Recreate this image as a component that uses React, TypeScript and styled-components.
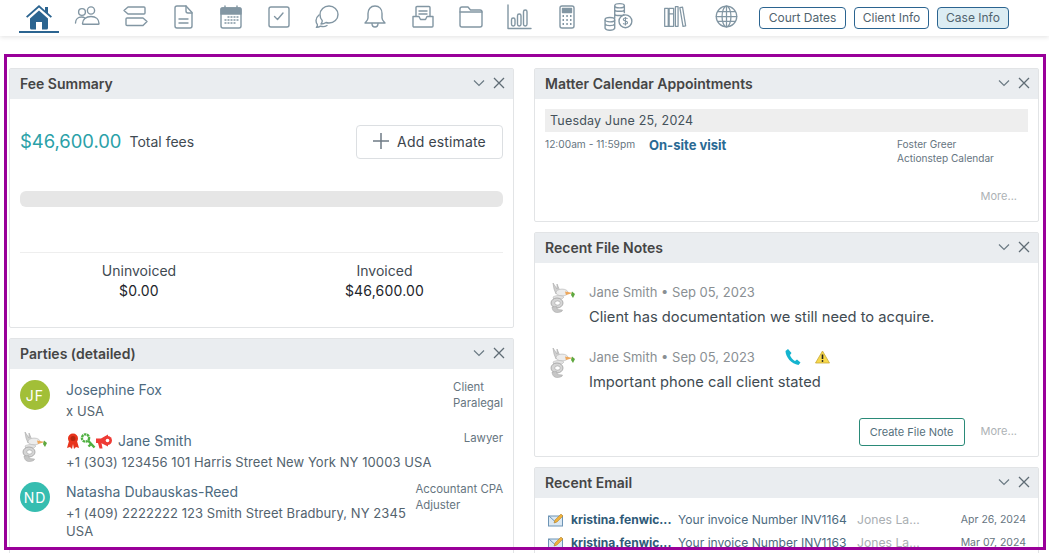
import React from 'react'
import styled, { createGlobalStyle } from 'styled-components'

const GlobalStyle = createGlobalStyle`
  html, body {
    margin: 0;
    height: 553px;
    overflow: hidden;
    background: #fff;
    font-family: Inter, "Liberation Sans", sans-serif;
  }
  * { box-sizing: border-box; }
`

const iconGrey = '#8296a3'

const Line = ({ children, size = 28 }: { children: React.ReactNode; size?: number }) => (
  <svg
    width={size}
    height={size}
    viewBox="0 0 28 28"
    fill="none"
    stroke={iconGrey}
    strokeWidth="1.4"
    strokeLinecap="round"
    strokeLinejoin="round">
    {children}
  </svg>
)

const toolbarIcons: { width: number; icon: React.ReactNode }[] = [
  {
    width: 48,
    icon: (
      <Line>
        <circle cx="9" cy="9" r="3.4" />
        <circle cx="18" cy="7.5" r="3.6" />
        <path d="M2.5 20c0-4 3-6 6-6 1.400 0 2.600.4 3.400 1" />
        <path d="M9.500 20.500c0-4 3.500-7 8.500-7s8 3 8 7c0 .5-.3.8-.8.8H10.300c-.5 0-.8-.3-.8-.8z" />
      </Line>
    )
  },
  {
    width: 48,
    icon: (
      <Line>
        <path d="M7 4h16a1 1 0 0 1 1 1v5a1 1 0 0 1-1 1H7L3 7.500z" />
        <path d="M6 15h16l4 3.500-4 4H6a1 1 0 0 1-1-1v-5.500a1 1 0 0 1 1-1z" />
      </Line>
    )
  },
  {
    width: 48,
    icon: (
      <Line>
        <path d="M8 3h9l6 6.500V23a2 2 0 0 1-2 2H8a2 2 0 0 1-2-2V5a2 2 0 0 1 2-2z" />
        <path d="M17 3v5a2 2 0 0 0 2 2h4M10 16h9M10 20h9" />
      </Line>
    )
  },
  {
    width: 48,
    icon: (
      <Line>
        <rect x="4" y="5" width="20" height="20" rx="2" />
        <path d="M4 6a1 1 0 0 1 1-1h18a1 1 0 0 1 1 1v5H4z" fill={iconGrey} />
        <path d="M8 3v3M20 3v3" />
        <path d="M11 14h1M14 14h1M17 14h1M20 14h1M8 17h1M11 17h1M14 17h1M17 17h1M20 17h1M8 20h1M11 20h1M14 20h1M17 20h1" />
      </Line>
    )
  },
  {
    width: 48,
    icon: (
      <Line>
        <rect x="4" y="4" width="20" height="20" rx="2" />
        <path d="M9.500 13.500l3 3 5.500-6.500" />
      </Line>
    )
  },
  {
    width: 48,
    icon: (
      <Line>
        <path d="M16 3c5 0 9 3.600 9 8.500S21 20 16 20c-1 0-2-.1-3-.5-1.500 1-3 1.500-5 1.500 1-1.200 1.500-2.300 1.200-3.600C7.700 16 7 13.800 7 11.500 7 6.600 11 3 16 3z" />
        <path d="M6 12c-2 1.600-3 3.500-3 5.600 0 1.500.5 2.900 1.400 4 .2 1-.2 2-1 2.800 1.800 0 3-.4 4.200-1.300 1.900.7 4.400.6 6.400-.6" />
      </Line>
    )
  },
  {
    width: 48,
    icon: (
      <Line>
        <path d="M14 3c4.500 0 7 3.300 7 7.500v4.500c0 2 1.500 3.300 3 5H4c1.500-1.700 3-3 3-5v-4.500C7 6.300 9.500 3 14 3z" />
        <path d="M11 20.500c0 2 1.300 3.500 3 3.500s3-1.500 3-3.500" />
      </Line>
    )
  },
  {
    width: 48,
    icon: (
      <Line>
        <path d="M7 13V4.500A1 1 0 0 1 8 3.500h12a1 1 0 0 1 1 1V13" />
        <path d="M10 8h8M10 11h8" />
        <path d="M4 13.500h6l1.500 3h5l1.500-3h6V23a1 1 0 0 1-1 1H5a1 1 0 0 1-1-1z" />
      </Line>
    )
  },
  {
    width: 48,
    icon: (
      <Line>
        <path d="M3 8V6a2 2 0 0 1 2-2h6l2.500 3H23a2 2 0 0 1 2 2v13a2 2 0 0 1-2 2H5a2 2 0 0 1-2-2z" />
        <path d="M3 9h22" />
      </Line>
    )
  },
  {
    width: 48,
    icon: (
      <Line>
        <path d="M3 2v23.500h23" />
        <rect x="6.500" y="15" width="3.500" height="8" rx="1.700" />
        <rect x="12.500" y="11" width="3.500" height="12" rx="1.700" />
        <rect x="18.500" y="7" width="3.500" height="16" rx="1.700" />
      </Line>
    )
  },
  {
    width: 48,
    icon: (
      <Line>
        <rect x="7" y="3" width="14" height="22" rx="2" />
        <rect x="9.500" y="5.500" width="9" height="4" fill={iconGrey} />
        <path
          d="M9.500 13h1.500M13.300 13h1.500M17 13h1.500M9.500 17h1.500M13.300 17h1.500M17 17h1.500M9.500 21h1.500M13.300 21h1.500M17 21h1.500"
          strokeWidth="2"
          strokeLinecap="butt"
        />
      </Line>
    )
  },
  {
    width: 56,
    icon: (
      <svg width="30" height="30" viewBox="0 0 28 28" fill="none" stroke={iconGrey} strokeWidth="1.3">
        <ellipse cx="14.500" cy="3.500" rx="4.500" ry="2" />
        <path d="M10 3.500v12M19 3.500v7M10 7.500c1 1.500 8 1.500 9 0M10 11.500c1 1.500 8 1.500 9 0" />
        <ellipse cx="5.500" cy="16.500" rx="4.500" ry="2" />
        <path d="M1 16.500v8c1 2.500 8 2.500 9 0v-8M1 20.500c1 2 8 2 9 0" />
        <circle cx="20" cy="18" r="6" />
        <path d="M22 15.500c-1-1-4-.8-4 .8 0 2 4 1 4 3 0 1.500-3 1.700-4.200.6M20 14v8" strokeWidth="1" />
      </svg>
    )
  },
  {
    width: 54,
    icon: (
      <Line size={25}>
        <path d="M3 5h4v20H3zM8 5h5v20H8zM8 11h5M15 3h3v22h-3zM20 4l3-.5 3.500 21-3 .5z" />
      </Line>
    )
  },
  {
    width: 50,
    icon: (
      <Line size={25}>
        <circle cx="14" cy="14" r="11.500" />
        <ellipse cx="14" cy="14" rx="5" ry="11.500" />
        <path d="M14 2.500v23M2.500 14h23M4 8.500h20M4 19.500h20" />
      </Line>
    )
  }
]

const Rabbit = () => (
  <svg width="28" height="32" viewBox="0 0 28 32">
    <path d="M5 1l4 6 0-5 3 7-4 3-2-5z" fill="#cfcfcf" stroke="#a8a8a8" strokeWidth="0.6" />
    <ellipse cx="14" cy="10.500" rx="6" ry="3.400" fill="#ececec" stroke="#b0b0b0" strokeWidth="0.6" />
    <path d="M17 9.500l8 1.500-7 2z" fill="#eda75c" />
    <path d="M24 9.500l3 2.500-2 4-2-3z" fill="#5fa83f" />
    <path d="M5 15c3-2 8-2 11 0l-2 2-8 1z" fill="#e2e2e2" stroke="#b0b0b0" strokeWidth="0.5" />
    <ellipse cx="9" cy="21" rx="6" ry="5" fill="#d5d5d5" stroke="#a0a0a0" strokeWidth="0.8" />
    <ellipse cx="9.500" cy="21" rx="2.800" ry="2.100" fill="#fff" stroke="#a0a0a0" strokeWidth="0.6" />
    <path d="M4 25c0 2 1.500 5.500 4.500 5.500 2.500 0 6-.5 6-2.500l-5-.5-1-3z" fill="#c6c6c6" stroke="#a0a0a0" strokeWidth="0.5" />
  </svg>
)

const RibbonIcon = () => (
  <svg width="14" height="16" viewBox="0 0 14 16">
    <path d="M3 8l-2 7 3-1 2 2 1-5 1 5 2-2 3 1-2-7z" fill="#e8341c" />
    <circle cx="7" cy="5.500" r="5" fill="#e8341c" />
    <circle cx="7" cy="5.500" r="2.500" fill="#b5270f" />
  </svg>
)

const KeyIcon = () => (
  <svg width="16" height="16" viewBox="0 0 16 16" fill="none" stroke="#4fb041" strokeWidth="2.4">
    <circle cx="5.500" cy="5" r="3.600" strokeDasharray="2.400 0.600" />
    <path d="M8 7.500l6.500 7M11 11l-2.500 2.500" />
  </svg>
)

const HornIcon = () => (
  <svg width="16" height="16" viewBox="0 0 16 16">
    <path d="M0 5.500h5l7-4v12L5 10H0z" fill="#ee3b35" />
    <path d="M2 10h3.500l1 5.500H3.500z" fill="#ee3b35" />
    <circle cx="11.500" cy="7.500" r="4.500" fill="#ee3b35" />
    <circle cx="11.500" cy="7.500" r="1.800" fill="#fff" />
  </svg>
)

const PhoneIcon = () => (
  <svg width="18" height="18" viewBox="0 0 18 18">
    <path d="M4 1L1.500 3c0 6 6 13 13 14l2-2.500-3.500-3-2 1.500C9 12 6.500 9 6 7l1.500-2z" fill="#14b4cf" />
  </svg>
)

const WarnIcon = () => (
  <svg width="15" height="14" viewBox="0 0 15 14">
    <path d="M7.500 1L14.500 13H.5z" fill="#f7d84a" stroke="#c9a93a" strokeWidth="0.8" strokeLinejoin="round" />
    <path d="M7.500 4.500v4.500" stroke="#222" strokeWidth="1.600" />
    <circle cx="7.500" cy="11" r="0.9" fill="#222" />
  </svg>
)

const MailIcon = () => (
  <svg width="16" height="14" viewBox="0 0 16 14">
    <rect x="0.5" y="3" width="14" height="10" fill="#dbe8f3" stroke="#6d94b5" />
    <path d="M1 3l6.500 6L14 3" fill="none" stroke="#6d94b5" />
    <path d="M6 10l1-3 6-6 2 2-6 6z" fill="#f0b13c" stroke="#a87820" strokeWidth="0.5" />
  </svg>
)

const Chevron = () => (
  <svg width="12" height="8" viewBox="0 0 12 8" fill="none" stroke="#6c7a84" strokeWidth="1.2">
    <path d="M1 1.500l5 5 5-5" />
  </svg>
)

const Cross = () => (
  <svg width="12" height="12" viewBox="0 0 12 12" fill="none" stroke="#5f6c75" strokeWidth="1.3">
    <path d="M1 1l10 10M11 1L1 11" />
  </svg>
)

const Panel = ({
  title,
  height,
  children
}: {
  title: string
  height: number
  children: React.ReactNode
}) => (
  <Card $height={height}>
    <CardHeader>
      <CardTitle>{title}</CardTitle>
      <CardTools>
        <Chevron />
        <Cross />
      </CardTools>
    </CardHeader>
    {children}
  </Card>
)

const App: React.FC = () => (
  <Page>
    <GlobalStyle />
    <Toolbar>
      <HomeTab>
        <svg width="28" height="26" viewBox="0 0 28 26">
          <path d="M14 1L1 12.500l1.300 1.300L14 3.500l11.700 10.300 1.300-1.300-4-3.500V3h-3v3.500z" fill="#2b6490" />
          <path d="M5 14.500L14 6.500l9 8V24a1.500 1.500 0 0 1-1.500 1.500H17V18h-6v7.500H6.500A1.500 1.500 0 0 1 5 24z" fill="#2b6490" />
        </svg>
      </HomeTab>
      {toolbarIcons.map((item, index) => (
        <IconTab key={index} $width={item.width}>
          {item.icon}
        </IconTab>
      ))}
      <QuickLinks>
        <QuickLink $width={87}>Court Dates</QuickLink>
        <QuickLink $width={75}>Client Info</QuickLink>
        <QuickLink $width={72} $active>
          Case Info
        </QuickLink>
      </QuickLinks>
    </Toolbar>

    <Columns>
      <Column>
        <Panel title="Fee Summary" height={260}>
          <FeeBody>
            <FeeTop>
              <FeeAmount>$46,600.00</FeeAmount>
              <FeeLabel>Total fees</FeeLabel>
              <AddButton>
                <svg width="16" height="16" viewBox="0 0 16 16" stroke="#6f7b85" strokeWidth="1.5">
                  <path d="M8 0v16M0 8h16" />
                </svg>
                Add estimate
              </AddButton>
            </FeeTop>
            <FeeBar />
            <FeeTotals>
              <FeeTotal>
                <span>Uninvoiced</span>
                <strong>$0.00</strong>
              </FeeTotal>
              <FeeTotal>
                <span>Invoiced</span>
                <strong>$46,600.00</strong>
              </FeeTotal>
            </FeeTotals>
          </FeeBody>
        </Panel>

        <Panel title="Parties (detailed)" height={300}>
          <PartyList>
            <PartyRow>
              <Avatar $color="#a2bf37">JF</Avatar>
              <PartyText>
                <PartyName>Josephine Fox</PartyName>
                <PartyDetail>x USA</PartyDetail>
              </PartyText>
              <PartyRoles>
                Client
                <br />
                Paralegal
              </PartyRoles>
            </PartyRow>
            <PartyRow>
              <Rabbit />
              <PartyText>
                <PartyName>
                  <BadgeIcons>
                    <RibbonIcon />
                    <KeyIcon />
                    <HornIcon />
                  </BadgeIcons>
                  Jane Smith
                </PartyName>
                <PartyDetail>+1 (303) 123456 101 Harris Street New York NY 10003 USA</PartyDetail>
              </PartyText>
              <PartyRoles>Lawyer</PartyRoles>
            </PartyRow>
            <PartyRow>
              <Avatar $color="#36bdb0">ND</Avatar>
              <PartyText>
                <PartyName>Natasha Dubauskas-Reed</PartyName>
                <PartyDetail>
                  +1 (409) 2222222 123 Smith Street Bradbury, NY 2345
                  <br />
                  USA
                </PartyDetail>
              </PartyText>
              <PartyRoles>
                Accountant CPA
                <br />
                Adjuster
              </PartyRoles>
            </PartyRow>
          </PartyList>
        </Panel>
      </Column>

      <Column>
        <Panel title="Matter Calendar Appointments" height={154}>
          <CalendarBody>
            <DateBar>Tuesday June 25, 2024</DateBar>
            <Appointment>
              <AppointmentTime>12:00am - 11:59pm</AppointmentTime>
              <AppointmentTitle>On-site visit</AppointmentTitle>
              <AppointmentMeta>
                Foster Greer
                <br />
                Actionstep Calendar
              </AppointmentMeta>
            </Appointment>
            <CardFooter>
              <MoreLink>More...</MoreLink>
            </CardFooter>
          </CalendarBody>
        </Panel>

        <Panel title="Recent File Notes" height={225}>
          <NotesBody>
            <Note>
              <Rabbit />
              <div>
                <NoteMeta>
                  <span>Jane Smith • Sep 05, 2023</span>
                </NoteMeta>
                <NoteText>Client has documentation we still need to acquire.</NoteText>
              </div>
            </Note>
            <Note>
              <Rabbit />
              <div>
                <NoteMeta>
                  <span>Jane Smith • Sep 05, 2023</span>
                  <NoteFlags>
                    <PhoneIcon />
                    <WarnIcon />
                  </NoteFlags>
                </NoteMeta>
                <NoteText>Important phone call client stated</NoteText>
              </div>
            </Note>
            <NotesFooter>
              <CreateButton>Create File Note</CreateButton>
              <MoreLink>More...</MoreLink>
            </NotesFooter>
          </NotesBody>
        </Panel>

        <Panel title="Recent Email" height={120}>
          <EmailList>
            <EmailRow>
              <MailIcon />
              <EmailFrom>kristina.fenwic...</EmailFrom>
              <EmailSubject>Your invoice Number INV1164</EmailSubject>
              <EmailMatter>Jones La...</EmailMatter>
              <EmailDate>Apr 26, 2024</EmailDate>
            </EmailRow>
            <EmailRow>
              <MailIcon />
              <EmailFrom>kristina.fenwic...</EmailFrom>
              <EmailSubject>Your invoice Number INV1163</EmailSubject>
              <EmailMatter>Jones La...</EmailMatter>
              <EmailDate>Mar 07, 2024</EmailDate>
            </EmailRow>
          </EmailList>
        </Panel>
      </Column>
    </Columns>
    <Highlight />
  </Page>
)

const Page = styled.div`
  position: relative;
  height: 553px;
  overflow: hidden;
`

const Toolbar = styled.div`
  height: 36px;
  padding-left: 15px;
  display: flex;
  align-items: flex-start;
  background: #fff;
  box-shadow: 0 1px 5px rgba(0, 0, 0, 0.12);
`

const IconTab = styled.div<{ $width: number }>`
  width: ${(p) => p.$width}px;
  height: 33px;
  display: flex;
  align-items: center;
  justify-content: center;
`

const HomeTab = styled(IconTab).attrs({ $width: 48 })`
  padding-top: 1px;
  position: relative;

  &::after {
    content: '';
    position: absolute;
    left: 4px;
    right: 4px;
    bottom: 0;
    height: 2px;
    background: #2b6490;
  }
`

const QuickLinks = styled.div`
  margin: 7px 0 0 8px;
  display: flex;
  gap: 8px;
`

const QuickLink = styled.button<{ $active?: boolean; $width: number }>`
  width: ${(p) => p.$width}px;
  height: 22px;
  padding: 0 0 1px;
  border: 1px solid #2b6490;
  border-radius: 4px;
  background: ${(p) => (p.$active ? '#dcedf3' : '#fff')};
  color: #51646f;
  font: 400 12px Inter, "Liberation Sans", sans-serif;
`

const Columns = styled.div`
  height: 517px;
  padding: 32px 10px 0 9px;
  display: grid;
  grid-template-columns: 505px 505px;
  column-gap: 20px;
  overflow: hidden;
`

const Column = styled.div`
  display: flex;
  flex-direction: column;
  gap: 10px;
`

const Card = styled.section<{ $height: number }>`
  height: ${(p) => p.$height}px;
  flex-shrink: 0;
  border: 1px solid #e2e4e6;
  border-radius: 2px;
  background: #fff;
`

const CardHeader = styled.header`
  height: 30px;
  padding: 0 8px 2px 10px;
  display: flex;
  align-items: center;
  justify-content: space-between;
  background: #eaedf0;
`

const CardTitle = styled.h2`
  margin: 0;
  font-size: 14px;
  font-weight: 600;
  color: #454545;
`

const CardTools = styled.div`
  display: flex;
  align-items: center;
  gap: 8px;
`

const FeeBody = styled.div`
  padding: 26px 10px 0;
`

const FeeTop = styled.div`
  display: flex;
  align-items: center;
`

const FeeAmount = styled.span`
  padding-bottom: 2px;
  font-size: 18.4px;
  color: #2aa1a8;
`

const FeeLabel = styled.span`
  margin-left: 8px;
  padding-bottom: 2px;
  flex: 1;
  font-size: 14px;
  color: #3f4a52;
`

const AddButton = styled.button`
  width: 147px;
  height: 34px;
  padding: 0 0 2px;
  display: flex;
  align-items: center;
  justify-content: center;
  gap: 8px;
  border: 1px solid #dcdfe2;
  border-radius: 4px;
  background: #fff;
  color: #3b444c;
  font: 400 14px Inter, "Liberation Sans", sans-serif;
  letter-spacing: 0.15px;
`

const FeeBar = styled.div`
  height: 16px;
  margin-top: 32px;
  border-radius: 6px;
  background: #e6e6e6;
`

const FeeTotals = styled.div`
  margin-top: 45px;
  padding-top: 8px;
  display: grid;
  grid-template-columns: 238px 253px;
  border-top: 1px solid #eeeeee;
`

const FeeTotal = styled.div`
  display: flex;
  flex-direction: column;
  align-items: center;
  font-size: 14px;
  line-height: 20px;
  color: #3f4a52;

  strong {
    font-weight: 400;
    letter-spacing: 0.2px;
    color: #1d252b;
  }
`

const PartyList = styled.div`
  padding: 11px 10px 0;
`

const PartyRow = styled.div`
  min-height: 51px;
  display: grid;
  grid-template-columns: 46px 1fr auto;
  align-items: start;
`

const Avatar = styled.div<{ $color: string }>`
  width: 30px;
  height: 30px;
  display: flex;
  align-items: center;
  justify-content: center;
  border-radius: 50%;
  background: ${(p) => p.$color};
  color: #fff;
  font-size: 14px;
  letter-spacing: 1px;
`

const PartyText = styled.div`
  min-width: 0;
  margin-top: -1px;
`

const PartyName = styled.div`
  display: flex;
  align-items: center;
  height: 21px;
  font-size: 14px;
  color: #4c6a80;
`

const BadgeIcons = styled.span`
  margin-right: 6px;
  display: inline-flex;
  align-items: center;
`

const PartyDetail = styled.div`
  font-size: 13px;
  line-height: 18px;
  padding-top: 2px;
  letter-spacing: 0.07px;
  color: #53636e;
  white-space: nowrap;
`

const PartyRoles = styled.div`
  margin-top: -1px;
  font-size: 11.4px;
  line-height: 16px;
  color: #66757f;
`

const CalendarBody = styled.div`
  padding: 10px 10px 0;
`

const DateBar = styled.div`
  height: 23px;
  padding: 0 0 1px 5px;
  display: flex;
  align-items: center;
  background: #eeeeee;
  font-size: 12.5px;
  letter-spacing: 0.2px;
  color: #45525b;
`

const Appointment = styled.div`
  padding-top: 4px;
  display: grid;
  grid-template-columns: 104px 248px 1fr;
`

const AppointmentTime = styled.span`
  padding-top: 1px;
  font-size: 10.2px;
  line-height: 14px;
  color: #66757f;
`

const AppointmentTitle = styled.span`
  font-size: 13px;
  line-height: 18px;
  font-weight: 700;
  color: #2a6a94;
`

const AppointmentMeta = styled.span`
  padding-top: 1px;
  font-size: 10.1px;
  line-height: 14px;
  color: #66757f;
`

const CardFooter = styled.div`
  padding: 24px 11px 0 0;
  display: flex;
  justify-content: flex-end;
`

const MoreLink = styled.span`
  padding-bottom: 2px;
  font-size: 11px;
  color: #adb2b5;
`

const NotesBody = styled.div`
  padding: 19px 10px 0 13px;
`

const Note = styled.div`
  height: 65px;
  display: grid;
  grid-template-columns: 41px 1fr;
`

const NoteMeta = styled.div`
  height: 20px;
  display: flex;
  align-items: center;
  font-size: 13px;
  color: #8a8f93;
`

const NoteFlags = styled.span`
  margin-left: 29px;
  display: inline-flex;
  align-items: center;
  gap: 13px;
`

const NoteText = styled.div`
  margin-top: 5px;
  font-size: 14.7px;
  line-height: 20px;
  color: #414b52;
`

const NotesFooter = styled.div`
  margin-top: 6px;
  padding-right: 11px;
  display: flex;
  align-items: center;
  justify-content: flex-end;
  gap: 16px;
`

const CreateButton = styled.button`
  width: 106px;
  height: 28px;
  padding: 0 0 1px;
  border: 1px solid #2a8a78;
  border-radius: 3px;
  background: #fff;
  color: #55707c;
  font: 400 11px Inter, "Liberation Sans", sans-serif;
`

const EmailList = styled.div`
  padding: 10px 12px 0 13px;
`

const EmailRow = styled.div`
  height: 23px;
  display: grid;
  grid-template-columns: 23px 107px 179px 1fr auto;
  align-items: center;
  white-space: nowrap;
`

const EmailFrom = styled.span`
  font-size: 12.1px;
  font-weight: 700;
  color: #2f5a78;
`

const EmailSubject = styled.span`
  font-size: 12.1px;
  color: #4c6a80;
`

const EmailMatter = styled.span`
  font-size: 12.2px;
  color: #a9aeb2;
`

const EmailDate = styled.span`
  font-size: 10.5px;
  color: #66757f;
`

const Highlight = styled.div`
  position: absolute;
  left: 4px;
  top: 54px;
  width: 1042px;
  height: 496px;
  border: 3px solid #990099;
  pointer-events: none;
`

export default App
